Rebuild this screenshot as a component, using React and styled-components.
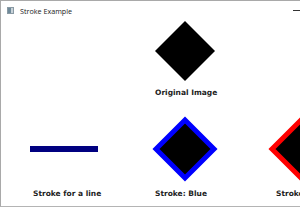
import React from "react";
import styled, { createGlobalStyle } from "styled-components";

const GlobalStyle = createGlobalStyle`
  html, body {
    margin: 0;
    padding: 0;
    background: #ffffff;
    overflow: hidden;
  }
`;

const Window = styled.div`
  width: 330px;
  height: 207px;
  border: 1px solid #a9a9a9;
  border-bottom-color: #b4b4b4;
  background: #ffffff;
  display: flex;
  flex-direction: column;
  box-sizing: border-box;
`;

const TitleBar = styled.div`
  height: 19px;
  display: flex;
  align-items: center;
  padding-left: 6px;
  gap: 6px;
  position: relative;
`;

const AppIcon = styled.div`
  width: 7px;
  height: 7px;
  background: linear-gradient(90deg, #6f8a9a 0 3px, #c9d3d9 3px);
  border: 0.5px solid #8a9aa4;
  box-sizing: border-box;
`;

const Title = styled.span`
  font-family: "Open Sans", "Noto Sans", sans-serif;
  font-size: 7.2px;
  color: #1a1a1a;
`;

const Minimize = styled.span`
  position: absolute;
  left: 292px;
  top: 9px;
  width: 7px;
  height: 1px;
  background: #333;
`;

const Canvas = styled.div`
  flex: 1;
  display: grid;
  grid-template-columns: 123px 116px 116px;
  grid-template-rows: auto auto;
  row-gap: 10px;
  padding: 1px 0 0 28px;
`;

const Cell = styled.div`
  grid-column: ${(p) => p.col};
  grid-row: ${(p) => p.row};
  display: flex;
  flex-direction: column;
`;

const ShapeArea = styled.div`
  height: ${(p) => p.h}px;
  display: flex;
  align-items: center;
  margin-left: ${(p) => p.offset || 0}px;
`;

const Line = styled.div`
  width: 68px;
  height: 6px;
  background: #000080;
  margin-top: 1px;
`;

const Label = styled.div`
  margin-top: 7px;
  margin-left: ${(p) => p.offset}px;
  height: 10px;
  line-height: 10px;
  font-family: "DejaVu Sans", Verdana, sans-serif;
  font-weight: bold;
  font-size: 7.5px;
  color: #222;
  white-space: nowrap;
`;

const Diamond = ({ size, stroke }) => {
  const c = size / 2;
  const inset = stroke ? 4 : 0;
  const pts = `${c},${inset} ${size - inset},${c} ${c},${size - inset} ${inset},${c}`;
  return (
    <svg width={size} height={size} viewBox={`0 0 ${size} ${size}`}>
      <polygon
        points={pts}
        fill="#000"
        stroke={stroke || "none"}
        strokeWidth={stroke ? 5 : 0}
        strokeLinejoin="miter"
      />
    </svg>
  );
};

export default function App() {
  return (
    <>
      <GlobalStyle />
      <Window>
        <TitleBar>
          <AppIcon />
          <Title>Stroke Example</Title>
          <Minimize />
        </TitleBar>
        <Canvas>
          <Cell col={2} row={1}>
            <ShapeArea h={60} offset={3}>
              <Diamond size={60} />
            </ShapeArea>
            <Label offset={3}>Original Image</Label>
          </Cell>
          <Cell col={1} row={2}>
            <ShapeArea h={66} offset={1}>
              <Line />
            </ShapeArea>
            <Label offset={4}>Stroke for a line</Label>
          </Cell>
          <Cell col={2} row={2}>
            <ShapeArea h={66}>
              <Diamond size={66} stroke="#0000ff" />
            </ShapeArea>
            <Label offset={3}>Stroke: Blue</Label>
          </Cell>
          <Cell col={3} row={2}>
            <ShapeArea h={66}>
              <Diamond size={66} stroke="#ff0000" />
            </ShapeArea>
            <Label offset={8}>Stroke: Red</Label>
          </Cell>
        </Canvas>
      </Window>
    </>
  );
}
